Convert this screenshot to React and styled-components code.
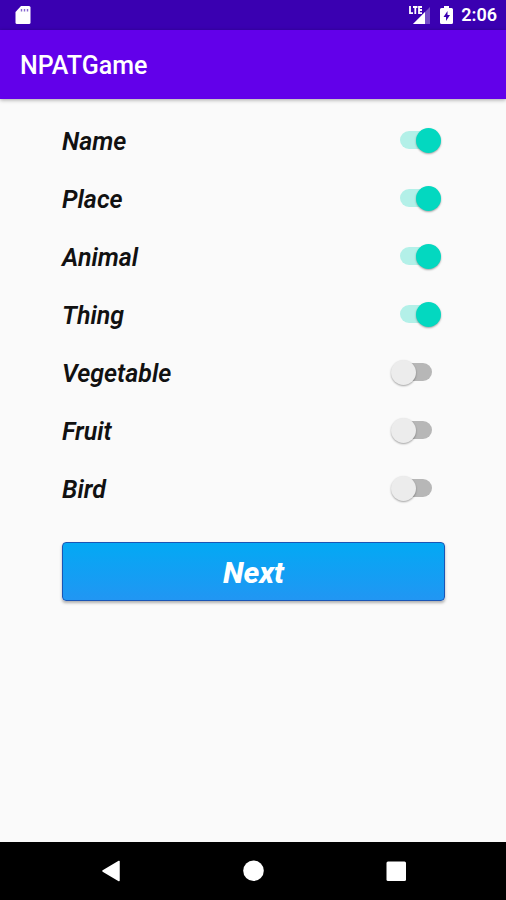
import React, { useState } from 'react';
import styled, { createGlobalStyle } from 'styled-components';

const GlobalStyle = createGlobalStyle`
  * {
    box-sizing: border-box;
  }

  body {
    margin: 0;
    background: #fafafa;
    font-family: Roboto, sans-serif;
  }
`;

const Screen = styled.div`
  min-height: 100vh;
  display: flex;
  flex-direction: column;
`;

const StatusBar = styled.div`
  height: 30px;
  padding: 0 9px 0 14px;
  display: flex;
  align-items: center;
  justify-content: space-between;
  background: #3a00b1;
  color: #fff;
`;

const StatusIcons = styled.div`
  display: flex;
  align-items: center;
  gap: 8px;
`;

const Clock = styled.span`
  font-size: 18px;
  font-weight: 600;
  line-height: 32px;
`;

const AppBar = styled.header`
  height: 69px;
  padding: 3px 20px 0;
  display: flex;
  align-items: center;
  background: #6200ea;
  box-shadow: 0 1px 4px rgba(0, 0, 0, 0.35);
`;

const Title = styled.h1`
  margin: 0;
  color: #fff;
  font-size: 25px;
  font-weight: 500;
  line-height: 32px;
`;

const Content = styled.main`
  flex: 1;
  padding: 13px 61px 24px 62px;
`;

const CategoryList = styled.div`
  display: flex;
  flex-direction: column;
  margin-bottom: 24px;
`;

const CategoryRow = styled.label`
  height: 58px;
  padding-right: 4px;
  display: flex;
  align-items: center;
  justify-content: space-between;
  color: #111;
  font-size: 25px;
  font-style: italic;
  font-weight: 600;
  cursor: pointer;
`;

const Switch = styled.input.attrs({ type: 'checkbox' })`
  appearance: none;
  width: 50px;
  height: 28px;
  margin: 0;
  padding-bottom: 2px;
  display: grid;
  align-items: center;
  cursor: pointer;

  &::before,
  &::after {
    content: '';
    grid-area: 1 / 1;
  }

  &::before {
    width: 32px;
    height: 18px;
    justify-self: center;
    border-radius: 9px;
    background: #b7b7b7;
  }

  &::after {
    width: 25px;
    height: 25px;
    justify-self: start;
    border-radius: 50%;
    background: #ececec;
    box-shadow: 0 1px 2px rgba(0, 0, 0, 0.35);
  }

  &:checked::before {
    background: #b3f0e8;
  }

  &:checked::after {
    justify-self: end;
    background: #03d8c0;
  }
`;

const NextButton = styled.button`
  width: 100%;
  height: 59px;
  padding: 2px 0 0;
  border: 1px solid #1a55b5;
  border-radius: 4px;
  background: linear-gradient(#03a9f4, #2196f3);
  box-shadow: 0 2px 3px rgba(0, 0, 0, 0.3);
  color: #fff;
  font-family: inherit;
  font-size: 30px;
  font-style: italic;
  font-weight: 800;
  cursor: pointer;
`;

const NavBar = styled.nav`
  height: 58px;
  padding: 0 40px;
  display: flex;
  background: #000;
`;

const NavButton = styled.button`
  flex: 1;
  padding: 0;
  display: flex;
  align-items: center;
  justify-content: center;
  border: none;
  background: none;
  color: #fff;
  cursor: pointer;
`;

const SdCardIcon = () => (
  <svg width="18" height="20" viewBox="0 0 18 20" aria-hidden="true">
    <path
      d="M7 1h8a1.500 1.500 0 0 1 1.500 1.500v15a1.500 1.500 0 0 1-1.500 1.500H3a1.500 1.500 0 0 1-1.500-1.500V7z"
      fill="#fff"
    />
    <path d="M7.500 4v2.500M10.500 4v2.500M13.500 4v2.500" stroke="#3a00b1" strokeWidth="1.4" opacity="0.6" />
  </svg>
);

const SignalIcon = () => (
  <svg width="24" height="20" viewBox="0 0 24 20" aria-hidden="true">
    <path d="M22 2v17H5z" fill="#fff" opacity="0.3" />
    <path d="M17 7v12H5z" fill="#fff" />
    <path
      d="M2 1v7.200h3M5 2h4.500M7.300 1.500V9M14 2h-3v6.200h3M11 5h3"
      fill="none"
      stroke="#fff"
      strokeWidth="1.8"
    />
  </svg>
);

const BatteryIcon = () => (
  <svg width="13" height="20" viewBox="0 0 13 20" aria-hidden="true">
    <path
      d="M4 1h5v2h2.500A1.500 1.500 0 0 1 13 4.500v13a1.500 1.500 0 0 1-1.500 1.500h-10A1.500 1.500 0 0 1 0 17.500v-13A1.500 1.500 0 0 1 1.500 3H4z"
      fill="#fff"
    />
    <path d="M7.500 6 3.500 12H6v4l4-6H7.500z" fill="#3a00b1" />
  </svg>
);

const BackIcon = () => (
  <svg width="22" height="22" viewBox="0 0 22 22" aria-hidden="true">
    <path
      d="M19 1.500v19L3 11z"
      fill="currentColor"
      stroke="currentColor"
      strokeWidth="1.500"
      strokeLinejoin="round"
    />
  </svg>
);

const HomeIcon = () => (
  <svg width="22" height="22" viewBox="0 0 22 22" aria-hidden="true">
    <circle cx="11.500" cy="10.700" r="10.300" fill="currentColor" />
  </svg>
);

const RecentsIcon = () => (
  <svg width="22" height="22" viewBox="0 0 22 22" aria-hidden="true">
    <rect x="2.500" y="1.500" width="19.500" height="19.500" rx="1.500" fill="currentColor" />
  </svg>
);

const categories = ['Name', 'Place', 'Animal', 'Thing', 'Vegetable', 'Fruit', 'Bird'];

const App = () => {
  const [selected, setSelected] = useState(['Name', 'Place', 'Animal', 'Thing']);

  const toggle = (category) => {
    setSelected((current) =>
      current.includes(category)
        ? current.filter((item) => item !== category)
        : [...current, category]
    );
  };

  return (
    <Screen>
      <GlobalStyle />
      <StatusBar>
        <SdCardIcon />
        <StatusIcons>
          <SignalIcon />
          <BatteryIcon />
          <Clock>2:06</Clock>
        </StatusIcons>
      </StatusBar>
      <AppBar>
        <Title>NPATGame</Title>
      </AppBar>
      <Content>
        <CategoryList>
          {categories.map((category) => (
            <CategoryRow key={category}>
              {category}
              <Switch
                checked={selected.includes(category)}
                onChange={() => toggle(category)}
              />
            </CategoryRow>
          ))}
        </CategoryList>
        <NextButton type="button">Next</NextButton>
      </Content>
      <NavBar>
        <NavButton type="button" aria-label="Back">
          <BackIcon />
        </NavButton>
        <NavButton type="button" aria-label="Home">
          <HomeIcon />
        </NavButton>
        <NavButton type="button" aria-label="Recent apps">
          <RecentsIcon />
        </NavButton>
      </NavBar>
    </Screen>
  );
};

export default App;
